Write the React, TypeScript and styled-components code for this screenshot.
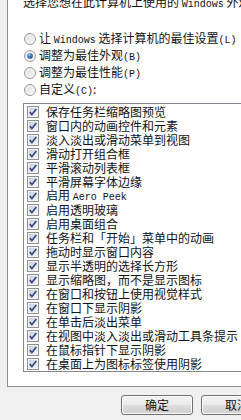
import React from "react";
import styled, { createGlobalStyle } from "styled-components";

const Global = createGlobalStyle`
  html, body { margin: 0; padding: 0; }
  body {
    background: #f0f0f0;
    overflow: hidden;
    width: 241px;
    height: 420px;
    font-family: "Noto Sans CJK SC", "Noto Sans", sans-serif;
    color: #111;
  }
`;

const Page = styled.div`
  width: 241px;
  height: 420px;
  overflow: hidden;
  padding-left: 7px;
  box-sizing: border-box;
`;

const Panel = styled.div`
  width: 320px;
  background: #fff;
  border-left: 1px solid #8e9094;
  border-bottom: 1px solid #8e9094;
  padding: 0 0 14px 15px;
  box-sizing: border-box;
`;

const Intro = styled.div`
  margin-top: -5px;
  height: 14px;
  line-height: 14px;
  font-size: 12px;
  white-space: nowrap;
`;

const Latin = styled.span`
  font-family: "Liberation Mono", monospace;
  font-size: 10px;
`;

const RadioGroup = styled.div`
  margin-top: 21px;
  display: flex;
  flex-direction: column;
`;

const RadioRow = styled.div`
  height: 17px;
  display: flex;
  align-items: center;
  gap: 3px;
  font-size: 12px;
  line-height: 17px;
  white-space: nowrap;
  padding-left: 1px;
`;

const ListBox = styled.div`
  margin-top: 5px;
  border: 1px solid #828790;
  border-right: none;
  padding-top: 1px;
  background: #fff;
  display: flex;
  flex-direction: column;
`;

const ItemRow = styled.div`
  height: 14px;
  display: flex;
  align-items: center;
  gap: 7px;
  padding-left: 3px;
  font-size: 12px;
  line-height: 14px;
  white-space: nowrap;
`;

const ButtonRow = styled.div`
  display: flex;
  gap: 8px;
  padding: 8px 0 0 114px;
`;

const Button = styled.div`
  flex: none;
  width: 72px;
  height: 20px;
  box-sizing: border-box;
  border: 1px solid #707070;
  border-radius: 3px;
  background: linear-gradient(#f2f2f2 0%, #ebebeb 50%, #dddddd 51%, #cfcfcf 100%);
  box-shadow: inset 0 0 0 1px #fbfbfb;
  display: flex;
  align-items: center;
  justify-content: center;
  font-size: 12px;
  line-height: 18px;
`;

const Radio: React.FC<{ checked?: boolean }> = ({ checked }) => (
  <svg width="12" height="12" viewBox="0 0 12 12" style={{ flex: "none" }}>
    <defs>
      <linearGradient id="rb" x1="0" y1="0" x2="1" y2="1">
        <stop offset="0" stopColor="#dcdcdc" />
        <stop offset="1" stopColor="#f8f8f8" />
      </linearGradient>
      <radialGradient id="rd" cx="0.4" cy="0.35" r="0.7">
        <stop offset="0" stopColor="#9fd0f5" />
        <stop offset="0.5" stopColor="#2d78c4" />
        <stop offset="1" stopColor="#123e78" />
      </radialGradient>
    </defs>
    <circle cx="6" cy="6" r="5.5" fill="url(#rb)" stroke="#9a9a9a" strokeWidth="1" />
    <circle cx="6" cy="6" r="4" fill="none" stroke="#fafafa" strokeWidth="0.8" />
    {checked && <circle cx="6" cy="6" r="2.8" fill="url(#rd)" />}
  </svg>
);

const Check: React.FC = () => (
  <svg width="12" height="12" viewBox="0 0 12 12" style={{ flex: "none" }}>
    <defs>
      <linearGradient id="cb" x1="0" y1="0" x2="1" y2="1">
        <stop offset="0" stopColor="#c6cfdc" />
        <stop offset="1" stopColor="#f4f6f9" />
      </linearGradient>
    </defs>
    <rect x="0.5" y="0.5" width="11" height="11" fill="#f6f6f6" stroke="#8f8f8f" />
    <rect x="2" y="2" width="8" height="8" fill="url(#cb)" />
    <path d="M2.8 6 L4.9 8.6 L9.3 2.9" fill="none" stroke="#334a82" strokeWidth="1.7" strokeLinejoin="round" />
  </svg>
);

const items: React.ReactNode[] = [
  "保存任务栏缩略图预览",
  "窗口内的动画控件和元素",
  "淡入淡出或滑动菜单到视图",
  "滑动打开组合框",
  "平滑滚动列表框",
  "平滑屏幕字体边缘",
  <>启用 <Latin>Aero Peek</Latin></>,
  "启用透明玻璃",
  "启用桌面组合",
  "任务栏和「开始」菜单中的动画",
  "拖动时显示窗口内容",
  "显示半透明的选择长方形",
  "显示缩略图，而不是显示图标",
  "在窗口和按钮上使用视觉样式",
  "在窗口下显示阴影",
  "在单击后淡出菜单",
  "在视图中淡入淡出或滑动工具条提示",
  "在鼠标指针下显示阴影",
  "在桌面上为图标标签使用阴影",
];

export default function App() {
  return (
    <Page>
      <Global />
      <Panel>
        <Intro>
          选择您想在此计算机上使用的 <Latin>Windows</Latin> 外观和性能设置。
        </Intro>
        <RadioGroup>
          <RadioRow>
            <Radio />
            <span>
              让 <Latin>Windows</Latin> 选择计算机的最佳设置<Latin>(L)</Latin>
            </span>
          </RadioRow>
          <RadioRow>
            <Radio checked />
            <span>
              调整为最佳外观<Latin>(B)</Latin>
            </span>
          </RadioRow>
          <RadioRow>
            <Radio />
            <span>
              调整为最佳性能<Latin>(P)</Latin>
            </span>
          </RadioRow>
          <RadioRow>
            <Radio />
            <span>
              自定义<Latin>(C)</Latin>:
            </span>
          </RadioRow>
        </RadioGroup>
        <ListBox>
          {items.map((t, i) => (
            <ItemRow key={i}>
              <Check />
              <span>{t}</span>
            </ItemRow>
          ))}
        </ListBox>
      </Panel>
      <ButtonRow>
        <Button>确定</Button>
        <Button>取消</Button>
      </ButtonRow>
    </Page>
  );
}
